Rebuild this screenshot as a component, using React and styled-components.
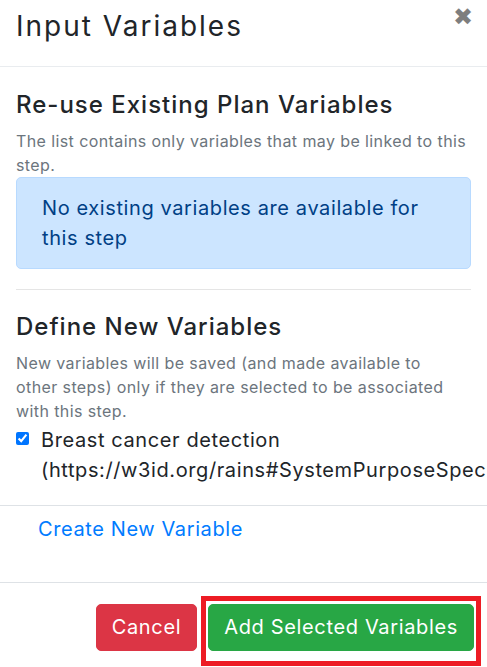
import React, { useState } from "react";
import styled, { createGlobalStyle } from "styled-components";

const GlobalStyle = createGlobalStyle`
  html, body {
    margin: 0;
    padding: 0;
    background: #fff;
    overflow: hidden;
  }
  body {
    font-family: "Inter", "Noto Sans", sans-serif;
    font-size: 20px;
    line-height: 1.5;
    letter-spacing: 0.6px;
    color: #212529;
  }
  * { box-sizing: border-box; }
`;

const Modal = styled.div`
  width: 487px;
  background: #fff;
`;

const Header = styled.div`
  display: flex;
  align-items: flex-start;
  justify-content: space-between;
  padding: 2px 14px 16px 16px;
  border-bottom: 1px solid #e9ecef;
`;

const Title = styled.h5`
  margin: 0;
  font-size: 28px;
  font-weight: 400;
  line-height: 48px;
  letter-spacing: 2px;
`;

const Close = styled.button`
  border: 0;
  background: transparent;
  padding: 0;
  margin-top: 3px;
  font-family: "DejaVu Sans", sans-serif;
  font-size: 24px;
  font-weight: 700;
  line-height: 24px;
  color: #000;
  opacity: 0.5;
  cursor: pointer;
`;

const Body = styled.div`
  padding: 24px 16px 20px 16px;
`;

const SectionTitle = styled.h4`
  margin: 0 0 9px 0;
  font-size: 24px;
  font-weight: 500;
  line-height: 1.2;
  letter-spacing: 1px;
`;

const Hint = styled.small`
  display: block;
  max-width: ${(p) => p.$maxWidth || "none"};
  font-size: 16px;
  line-height: 24px;
  letter-spacing: 0.4px;
  color: #6c757d;
`;

const Alert = styled.div`
  margin: 0 0 20px 0;
  padding: 15px 25px;
  background: #cce5ff;
  border: 1px solid #b8daff;
  border-radius: 5px;
  color: #004085;
  line-height: 30px;
`;

const Rule = styled.hr`
  margin: 0 0 23px 0;
  border: 0;
  border-top: 1px solid #e5e5e5;
`;

const CheckRow = styled.label`
  display: flex;
  align-items: flex-start;
  gap: 12px;
  margin-top: 2px;
  line-height: 30px;
  white-space: nowrap;
`;

const Check = styled.input`
  width: 13px;
  height: 13px;
  margin: 7px 0 0 0;
  accent-color: #0075ff;
  flex: none;
`;

const LinkBar = styled.div`
  padding: 8px 22px 38px 38px;
  border-top: 1px solid #dee2e6;
  border-bottom: 1px solid #dee2e6;
`;

const LinkButton = styled.button`
  border: 0;
  background: transparent;
  padding: 0;
  font: inherit;
  letter-spacing: inherit;
  color: #007bff;
  line-height: 30px;
  cursor: pointer;
`;

const Footer = styled.div`
  display: flex;
  justify-content: flex-end;
  align-items: flex-start;
  gap: 4px;
  padding: 13px 6px 0 0;
`;

const Button = styled.button`
  margin-top: ${(p) => (p.$offset ? "8px" : "0")};
  padding: 7.5px 15px;
  border: 1px solid ${(p) => p.$bg};
  border-radius: 5px;
  background: ${(p) => p.$bg};
  color: #fff;
  font: inherit;
  letter-spacing: 0.65px;
  line-height: 30px;
  cursor: pointer;
`;

const Highlight = styled.span`
  display: inline-flex;
  padding: 3px 2px 10px;
  border: 5px solid #ed1c24;
`;

export default function App() {
  const [checked, setChecked] = useState(true);
  return (
    <>
      <GlobalStyle />
      <Modal>
        <Header>
          <Title>Input Variables</Title>
          <Close aria-label="Close">✖</Close>
        </Header>
        <Body>
          <SectionTitle>Re-use Existing Plan Variables</SectionTitle>
          <Hint>The list contains only variables that may be linked to this step.</Hint>
          <Alert>No existing variables are available for this step</Alert>
          <Rule />
          <SectionTitle>Define New Variables</SectionTitle>
          <Hint $maxWidth="448px">
            New variables will be saved (and made available to other steps) only if they are selected to be associated with this step.
          </Hint>
          <CheckRow>
            <Check type="checkbox" checked={checked} onChange={(e) => setChecked(e.target.checked)} />
            <span>
              Breast cancer detection
              <br />
              (https://w3id.org/rains#SystemPurposeSpecification)
            </span>
          </CheckRow>
        </Body>
        <LinkBar>
          <LinkButton>Create New Variable</LinkButton>
        </LinkBar>
        <Footer>
          <Button $bg="#dc3545" $offset>Cancel</Button>
          <Highlight>
            <Button $bg="#28a745">Add Selected Variables</Button>
          </Highlight>
        </Footer>
      </Modal>
    </>
  );
}
